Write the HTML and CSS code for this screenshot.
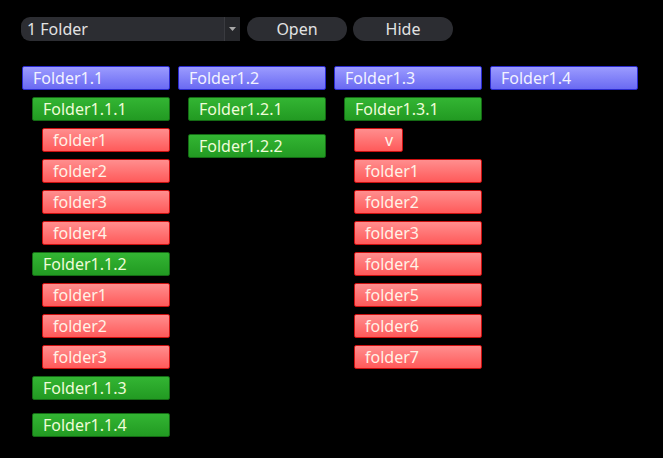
FILE: index.html
```html
<!DOCTYPE html>
<html>
<head>
<meta charset="utf-8">
<link rel="stylesheet" href="styles.css">
</head>
<body>
<div class="toolbar">
  <div class="select">
    <span class="select-text">1 Folder</span>
    <span class="select-arrow"><svg width="7" height="4" viewBox="0 0 7 4"><path d="M0 0H7L3.5 4Z" fill="#a8a8a8"/></svg></span>
  </div>
  <button class="btn">Open</button>
  <button class="btn">Hide</button>
</div>
<div class="columns">
  <div class="node">
    <div class="label l1">Folder1.1</div>
    <div class="children">
      <div class="node">
        <div class="label l2">Folder1.1.1</div>
        <div class="children">
          <div class="node"><div class="label l3">folder1</div></div>
          <div class="node"><div class="label l3">folder2</div></div>
          <div class="node"><div class="label l3">folder3</div></div>
          <div class="node"><div class="label l3">folder4</div></div>
        </div>
      </div>
      <div class="node">
        <div class="label l2">Folder1.1.2</div>
        <div class="children">
          <div class="node"><div class="label l3">folder1</div></div>
          <div class="node"><div class="label l3">folder2</div></div>
          <div class="node"><div class="label l3">folder3</div></div>
        </div>
      </div>
      <div class="node">
        <div class="label l2">Folder1.1.3</div>
        <div class="children"></div>
      </div>
      <div class="node">
        <div class="label l2">Folder1.1.4</div>
        <div class="children"></div>
      </div>
    </div>
  </div>
  <div class="node">
    <div class="label l1">Folder1.2</div>
    <div class="children">
      <div class="node">
        <div class="label l2">Folder1.2.1</div>
        <div class="children"></div>
      </div>
      <div class="node">
        <div class="label l2">Folder1.2.2</div>
        <div class="children"></div>
      </div>
    </div>
  </div>
  <div class="node">
    <div class="label l1">Folder1.3</div>
    <div class="children">
      <div class="node">
        <div class="label l2">Folder1.3.1</div>
        <div class="children">
          <div class="node"><div class="label l3 short">v</div></div>
          <div class="node"><div class="label l3">folder1</div></div>
          <div class="node"><div class="label l3">folder2</div></div>
          <div class="node"><div class="label l3">folder3</div></div>
          <div class="node"><div class="label l3">folder4</div></div>
          <div class="node"><div class="label l3">folder5</div></div>
          <div class="node"><div class="label l3">folder6</div></div>
          <div class="node"><div class="label l3">folder7</div></div>
        </div>
      </div>
    </div>
  </div>
  <div class="node">
    <div class="label l1">Folder1.4</div>
  </div>
</div>
</body>
</html>
```
FILE: styles.css
```css
html, body {
  margin: 0;
  padding: 0;
  background: #000;
  font-family: "Noto Sans", "Open Sans", sans-serif;
  font-size: 16px;
}
.toolbar {
  display: flex;
  gap: 7px;
  padding: 17px 0 0 21px;
  height: 24px;
}
.select {
  display: flex;
  width: 219px;
  height: 24px;
  background: #2c2d32;
  border-radius: 9px 0 0 9px;
  color: #e2e2e2;
  box-sizing: border-box;
}
.select-text {
  flex: 1;
  padding-left: 6px;
  line-height: 24px;
}
.select-arrow {
  width: 15px;
  background: #26272b;
  border-left: 1px solid #3a3b40;
  display: flex;
  align-items: center;
  justify-content: center;
}
.btn {
  width: 100px;
  height: 24px;
  border: none;
  border-radius: 12px;
  background: #2c2d32;
  color: #e2e2e2;
  font-family: inherit;
  font-size: 16px;
  padding: 0;
  line-height: 24px;
}
.toolbar .btn + .btn {
  margin-left: -1px;
}
.columns {
  display: flex;
  align-items: flex-start;
  gap: 8px;
  padding: 25px 0 0 22px;
}
.columns > .node {
  width: 148px;
}
.node {
  display: flex;
  flex-direction: column;
}
.label {
  box-sizing: border-box;
  height: 24px;
  line-height: 22px;
  padding-left: 10px;
  border: 1px solid;
  border-radius: 2px;
  margin-bottom: 7px;
  white-space: nowrap;
}
.children {
  display: flex;
  flex-direction: column;
  padding-left: 10px;
}
.children:empty {
  height: 6px;
}
.l1 {
  background: linear-gradient(#9b9bff, #6a6af2);
  border-color: #2a2ad0;
  color: #f2f2ff;
}
.l2 {
  background: linear-gradient(#33b533, #229a22);
  border-color: #146a14;
  color: #eefcd8;
}
.l3 {
  background: linear-gradient(#ff8e8e, #ff5a5a);
  border-color: #cc1010;
  color: #fff1e6;
}
.short {
  align-self: flex-start;
  width: 49px;
  padding-left: 30px;
}
```
